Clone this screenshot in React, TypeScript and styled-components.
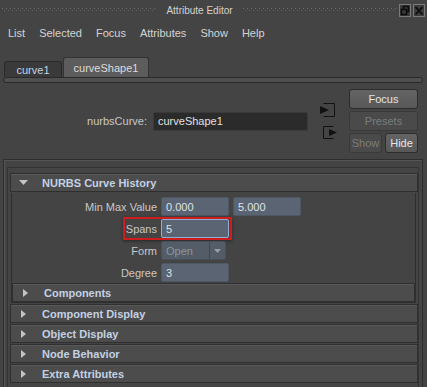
import styled, { createGlobalStyle } from "styled-components";

const GlobalStyle = createGlobalStyle`
  html, body {
    margin: 0;
    padding: 0;
    background: #444444;
  }
  body {
    font-family: "Liberation Sans", Arial, sans-serif;
    font-size: 11px;
    color: #c8c8c8;
    overflow: hidden;
  }
`;

const Window = styled.div`
  width: 427px;
  height: 387px;
  display: flex;
  flex-direction: column;
  background: #444444;
  overflow: hidden;
`;

/* title bar with the dotted drag grips */
const TitleBar = styled.div`
  height: 20px;
  flex-shrink: 0;
  display: flex;
  align-items: center;
  padding: 0 2px;
`;

const Grip = styled.div`
  flex: 1;
  height: 4px;
  background-image: repeating-linear-gradient(90deg, #6c6c6c 0 1px, transparent 1px 4px),
    repeating-linear-gradient(90deg, #626262 0 1px, transparent 1px 4px);
  background-size: 100% 1px, 100% 1px;
  background-position: 0 0, 2px 2px;
  background-repeat: no-repeat;
`;

const Title = styled.div`
  padding: 0 10px;
  font-size: 10px;
  color: #d2d2d2;
`;

const WinButtons = styled.div`
  display: flex;
  gap: 2px;
  margin-left: 2px;
`;

const WinButton = styled.div`
  width: 12px;
  height: 13px;
  box-sizing: border-box;
  border: 1px solid #7a7a7a;
  background: #3c3c3c;
  display: flex;
  align-items: center;
  justify-content: center;
`;

const MenuBar = styled.div`
  height: 26px;
  flex-shrink: 0;
  display: flex;
  align-items: center;
  gap: 14px;
  padding: 0 8px;
`;

const MenuItem = styled.span`
  color: #d4d4d4;
`;

const TabStrip = styled.div`
  height: 31px;
  flex-shrink: 0;
  display: flex;
  align-items: flex-end;
  padding-left: 4px;
`;

const Tab = styled.div<{ $active?: boolean }>`
  box-sizing: border-box;
  width: ${(p) => (p.$active ? 86 : 58)}px;
  height: ${(p) => (p.$active ? 20 : 16)}px;
  margin-left: ${(p) => (p.$active ? 1 : 0)}px;
  border: 1px solid ${(p) => (p.$active ? "#333333" : "#2a2a2a")};
  border-bottom: none;
  border-radius: 3px 3px 0 0;
  background: ${(p) => (p.$active ? "#5c5c5c" : "#3a3a3a")};
  color: ${(p) => (p.$active ? "#dcdcdc" : "#c6d2e4")};
  display: flex;
  align-items: center;
  justify-content: center;
`;

const TabBar = styled.div`
  height: 6px;
  flex-shrink: 0;
  box-sizing: border-box;
  margin: 0 4px 0 3px;
  border: 1px solid #2a2a2a;
  border-radius: 3px;
  background: #4f4f4f;
`;

const NodeSection = styled.div`
  height: 76px;
  flex-shrink: 0;
  box-sizing: border-box;
  display: flex;
  align-items: center;
  justify-content: flex-end;
  padding-right: 9px;
`;

const NodeLabel = styled.span`
  margin-right: 6px;
  color: #c8c8c8;
`;

const NameField = styled.div`
  width: 155px;
  height: 19px;
  box-sizing: border-box;
  margin-right: 11px;
  padding-left: 4px;
  border: 1px solid #3a3a3a;
  border-radius: 2px;
  background: #2b2b2b;
  color: #e0e0e0;
  display: flex;
  align-items: center;
`;

const ConnIcons = styled.div`
  width: 19px;
  margin-right: 11px;
  display: flex;
  flex-direction: column;
  gap: 8px;
`;

const ButtonCol = styled.div`
  width: 69px;
  display: flex;
  flex-direction: column;
  gap: 2px;
`;

const ButtonRow = styled.div`
  display: flex;
  gap: 3px;
`;

const Btn = styled.div<{ $disabled?: boolean; $half?: boolean }>`
  ${(p) => (p.$half ? "flex: 1;" : "")}
  height: 20px;
  box-sizing: border-box;
  border: 1px solid ${(p) => (p.$disabled ? "#393939" : "#2c2c2c")};
  border-radius: 3px;
  background: ${(p) =>
    p.$disabled ? "#4a4a4a" : "linear-gradient(#646464, #585858)"};
  color: ${(p) => (p.$disabled ? "#7c7c7c" : "#e6e6e6")};
  display: flex;
  align-items: center;
  justify-content: center;
`;

const GroupFrame = styled.div`
  flex: 1;
  box-sizing: border-box;
  margin: 0 4px 0 3px;
  padding: 7px 3px 0 3px;
  border: 1px solid #2e2e2e;
  border-bottom: none;
  box-shadow: inset 1px 1px 0 #555555;
  display: flex;
  flex-direction: column;
`;

const ScrollArea = styled.div`
  flex: 1;
  border: 1px solid #333333;
  border-bottom: none;
  padding: 5px 0 0 2px;
  display: flex;
  flex-direction: column;
`;

const FrameHeader = styled.div<{ $nested?: boolean }>`
  height: 19px;
  flex-shrink: 0;
  box-sizing: border-box;
  margin-bottom: ${(p) => (p.$nested ? 0 : 1)}px;
  padding-left: 7px;
  border: 1px solid #2f2f2f;
  background: #4c4c4c;
  box-shadow: inset 0 1px 0 #5a5a5a;
  display: flex;
  align-items: center;
  font-weight: bold;
  color: #c3d1e3;
`;

const ArrowSlot = styled.span`
  width: 10px;
  margin-right: 14px;
  display: flex;
  justify-content: center;
`;

const FrameBody = styled.div`
  margin: 0 2px 1px 1px;
  padding-top: 4px;
  border: 1px solid #2f2f2f;
  border-top: none;
  display: flex;
  flex-direction: column;
`;

const AttrRows = styled.div`
  display: flex;
  flex-direction: column;
  gap: 3px;
  margin-bottom: 1px;
`;

const AttrRow = styled.div`
  position: relative;
  height: 19px;
  display: flex;
  align-items: center;
  gap: 4px;
`;

const AttrLabel = styled.span`
  width: 145px;
  text-align: right;
  color: #c8c8c8;
`;

const Field = styled.div<{ $focused?: boolean }>`
  width: 68px;
  height: 19px;
  box-sizing: border-box;
  padding-left: 4px;
  border: 1px solid ${(p) => (p.$focused ? "#8eaed6" : "#4e5763")};
  border-radius: 2px;
  background: #5a6472;
  color: #dfe3e8;
  display: flex;
  align-items: center;
`;

const Dropdown = styled.div`
  width: 65px;
  height: 19px;
  box-sizing: border-box;
  border: 1px solid #484f59;
  border-radius: 2px;
  background: #545c67;
  display: flex;
`;

const DropText = styled.span`
  flex: 1;
  padding-left: 4px;
  color: #8e959e;
  display: flex;
  align-items: center;
`;

const DropArrow = styled.span`
  width: 15px;
  border-left: 1px solid #424851;
  display: flex;
  align-items: center;
  justify-content: center;
`;

/* red annotation box laid over the Spans row */
const Highlight = styled.div`
  position: absolute;
  left: 111px;
  top: -2px;
  width: 109px;
  height: 23px;
  box-sizing: border-box;
  border: 2px solid #cf1d1d;
  box-shadow: 0 1px 3px rgba(0, 0, 0, 0.45);
  pointer-events: none;
`;

const DownArrow = () => (
  <svg width="9" height="5" viewBox="0 0 9 5">
    <polygon points="0,0 9,0 4.5,5" fill="#c4c4c4" />
  </svg>
);

const RightArrow = () => (
  <svg width="5" height="8" viewBox="0 0 5 8">
    <polygon points="0,0 5,4 0,8" fill="#c4c4c4" />
  </svg>
);

const InputConnIcon = () => (
  <svg width="19" height="14" viewBox="0 0 19 14">
    <path d="M4.5 0.5 H15.5 V13.5 H4.5" fill="none" stroke="#111" />
    <polygon points="1,3 10,7 1,11" fill="#111" />
  </svg>
);

const OutputConnIcon = () => (
  <svg width="19" height="14" viewBox="0 0 19 14">
    <path d="M14.5 1.5 H4.5 V13.5 H14.5" fill="none" stroke="#111" />
    <polygon points="10,4 18,7.5 10,11" fill="#111" />
  </svg>
);

const collapsed = ["Component Display", "Object Display", "Node Behavior", "Extra Attributes"];
const menus = ["List", "Selected", "Focus", "Attributes", "Show", "Help"];

export default function App() {
  return (
    <Window>
      <GlobalStyle />
      <TitleBar>
        <Grip />
        <Title>Attribute Editor</Title>
        <Grip />
        <WinButtons>
          <WinButton>
            <svg width="10" height="11" viewBox="0 0 10 11">
              <rect x="3.5" y="1.5" width="5" height="5" fill="none" stroke="#0c0c0c" strokeWidth="1.6" />
              <rect x="1.5" y="4.5" width="5" height="5" fill="#3c3c3c" stroke="#0c0c0c" strokeWidth="1.6" />
            </svg>
          </WinButton>
          <WinButton>
            <svg width="10" height="11" viewBox="0 0 10 11">
              <path d="M1.5 2 L8.5 9.5 M8.5 2 L1.5 9.5" stroke="#0c0c0c" strokeWidth="1.8" />
            </svg>
          </WinButton>
        </WinButtons>
      </TitleBar>

      <MenuBar>
        {menus.map((m) => (
          <MenuItem key={m}>{m}</MenuItem>
        ))}
      </MenuBar>

      <TabStrip>
        <Tab>curve1</Tab>
        <Tab $active>curveShape1</Tab>
      </TabStrip>
      <TabBar />

      <NodeSection>
        <NodeLabel>nurbsCurve:</NodeLabel>
        <NameField>curveShape1</NameField>
        <ConnIcons>
          <InputConnIcon />
          <OutputConnIcon />
        </ConnIcons>
        <ButtonCol>
          <Btn>Focus</Btn>
          <Btn $disabled>Presets</Btn>
          <ButtonRow>
            <Btn $disabled $half>Show</Btn>
            <Btn $half>Hide</Btn>
          </ButtonRow>
        </ButtonCol>
      </NodeSection>

      <GroupFrame>
        <ScrollArea>
          <FrameHeader>
            <ArrowSlot>
              <DownArrow />
            </ArrowSlot>
            NURBS Curve History
          </FrameHeader>
          <FrameBody>
            <AttrRows>
              <AttrRow>
                <AttrLabel>Min Max Value</AttrLabel>
                <Field>0.000</Field>
                <Field>5.000</Field>
              </AttrRow>
              <AttrRow>
                <AttrLabel>Spans</AttrLabel>
                <Field $focused>5</Field>
                <Highlight />
              </AttrRow>
              <AttrRow>
                <AttrLabel>Form</AttrLabel>
                <Dropdown>
                  <DropText>Open</DropText>
                  <DropArrow>
                    <svg width="7" height="4" viewBox="0 0 7 4">
                      <polygon points="0,0 7,0 3.5,4" fill="#9a9ea4" />
                    </svg>
                  </DropArrow>
                </Dropdown>
              </AttrRow>
              <AttrRow>
                <AttrLabel>Degree</AttrLabel>
                <Field>3</Field>
              </AttrRow>
            </AttrRows>
            <FrameHeader $nested>
              <ArrowSlot>
                <RightArrow />
              </ArrowSlot>
              Components
            </FrameHeader>
          </FrameBody>
          {collapsed.map((c) => (
            <FrameHeader key={c}>
              <ArrowSlot>
                <RightArrow />
              </ArrowSlot>
              {c}
            </FrameHeader>
          ))}
        </ScrollArea>
      </GroupFrame>
    </Window>
  );
}
